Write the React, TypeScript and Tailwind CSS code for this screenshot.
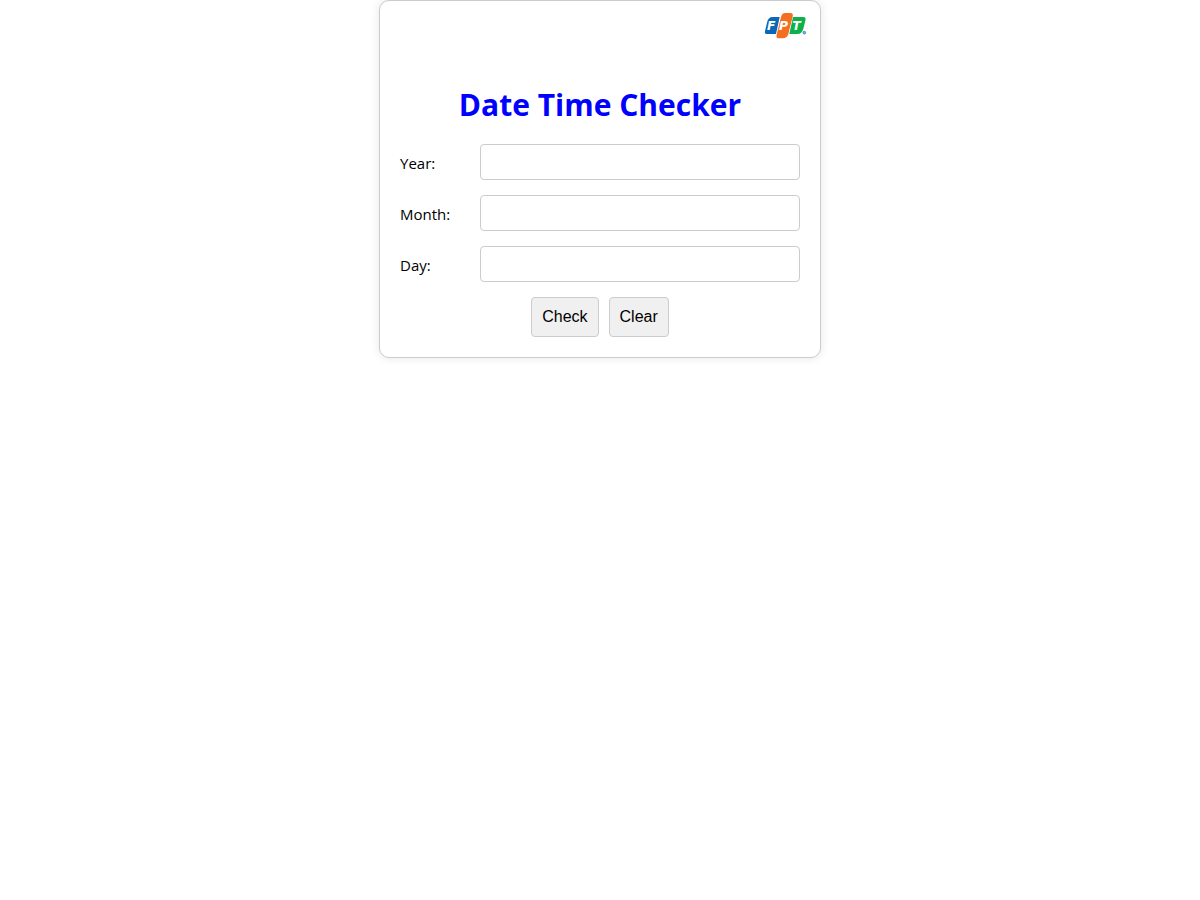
import { useState } from "react";

const fields = ["Year", "Month", "Day"] as const;
type Field = (typeof fields)[number];
const empty: Record<Field, string> = { Year: "", Month: "", Day: "" };

function Logo() {
  return (
    <svg viewBox="0 0 135 90" className="h-[30px] w-[45px]" role="img" aria-label="FPT">
      <path d="M24 15H47L36 66H8Q1 66 3 58L9 32Q12 15 26 15Z" fill="#0a68b4" />
      <path d="M102 15H118Q127 15 124 26L118 50Q114 66 100 66H76L87 15Z" fill="#0db14b" />
      <path d="M62 3H79Q89 3 86 14L73 66Q69 79 56 79H45Q35 79 38 68L50 19Q53 3 64 3Z" fill="#f37022" />
      <g
        fill="#fff"
        fontFamily="'DejaVu Sans', Verdana, sans-serif"
        fontSize="37"
        fontWeight="700"
        fontStyle="italic"
      >
        <text x="9" y="54">F</text>
        <text x="45" y="54">P</text>
        <text x="85" y="54">T</text>
      </g>
      <circle cx="121" cy="62" r="4" fill="#8db4d8" stroke="#0a68b4" strokeWidth="2" />
    </svg>
  );
}

export default function App() {
  const [values, setValues] = useState(empty);
  const button =
    "rounded border border-[#ccc] bg-[#f0f0f0] px-2.5 py-[7px] font-['Liberation_Sans',Arial,sans-serif] text-base text-black";

  return (
    <div className="min-h-screen bg-white">
      <main className="mx-auto w-full max-w-[442px] rounded-[10px] border border-[#ccc] bg-white px-5 pb-5 font-['Open_Sans','Noto_Sans',sans-serif] text-base text-black shadow-[0_0_10px_rgba(0,0,0,0.1)]">
        <header className="-mr-[9px] flex justify-end pt-[11px]">
          <Logo />
        </header>
        <h1 className="mt-[41px] text-center text-[30px] leading-[43px] font-bold text-[#0000ff]">Date Time Checker</h1>
        <form className="mt-[18px] flex flex-col gap-[15px]" onSubmit={(e) => e.preventDefault()}>
          {fields.map((name) => (
            <div key={name} className="flex items-center">
              <label htmlFor={name} className="w-20 shrink-0 pt-0.5 text-[15px]">
                {name}:
              </label>
              <input
                id={name}
                type="text"
                value={values[name]}
                onChange={(e) => setValues({ ...values, [name]: e.target.value })}
                className="h-9 min-w-0 flex-1 rounded border border-[#ccc] px-2"
              />
            </div>
          ))}
          <div className="flex justify-center gap-2.5">
            <button type="submit" className={button}>
              Check
            </button>
            <button type="button" className={button} onClick={() => setValues(empty)}>
              Clear
            </button>
          </div>
        </form>
      </main>
    </div>
  );
}
